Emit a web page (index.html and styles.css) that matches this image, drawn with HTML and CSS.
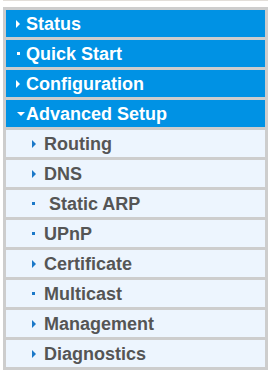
FILE: index.html
```html
<!DOCTYPE html>
<html lang="en">

<head>
    <meta charset="UTF-8">
    <meta name="viewport" content="width=device-width, initial-scale=1.0">
    <title>Menu</title>
    <link rel="stylesheet" href="styles.css">
</head>

<body>
    <div class="topline"></div>
    <div class="menu">
        <!-- top level items -->
        <div class="item main"><span class="ico"><i class="tri-r"></i></span>Status</div>
        <div class="item main"><span class="ico"><i class="sq"></i></span>Quick Start</div>
        <div class="item main"><span class="ico"><i class="tri-r"></i></span>Configuration</div>
        <div class="item main"><span class="ico"><i class="tri-d"></i></span>Advanced Setup</div>

        <!-- advanced setup submenu -->
        <div class="item sub"><span class="ico"><i class="tri-r"></i></span>Routing</div>
        <div class="item sub"><span class="ico"><i class="tri-r"></i></span>DNS</div>
        <div class="item sub"><span class="ico"><i class="sq"></i></span>&nbsp;Static ARP</div>
        <div class="item sub"><span class="ico"><i class="sq"></i></span>UPnP</div>
        <div class="item sub"><span class="ico"><i class="tri-r"></i></span>Certificate</div>
        <div class="item sub"><span class="ico"><i class="sq"></i></span>Multicast</div>
        <div class="item sub"><span class="ico"><i class="tri-r"></i></span>Management</div>
        <div class="item sub"><span class="ico"><i class="tri-r"></i></span>Diagnostics</div>
    </div>
</body>

</html>
```

FILE: styles.css
```css
* {
    padding: 0;
    margin: 0;
    box-sizing: border-box;
}

body {
    background-color: white;
    font-family: "Liberation Sans", Arial, sans-serif;
}

.topline {
    margin-left: 3px;
    width: 265px;
    height: 1px;
    background-color: #e2ded9;
}

.menu {
    margin: 6px 0 0 3px;
    width: 265px;
    padding: 3px;
    background-color: #cdcdcd;
    display: flex;
    flex-direction: column;
    gap: 3px;
}

.item {
    height: 27px;
    display: flex;
    align-items: center;
    padding-top: 2px;
    font-size: 18px;
    font-weight: bold;
    white-space: nowrap;
}

.ico {
    display: flex;
    align-items: center;
    height: 100%;
    margin-top: -2px;
}

.main {
    background-color: #0092e4;
    color: white;
    padding-left: 10px;
}

.main .ico {
    width: 10px;
}

.sub {
    background-color: #edf5fe;
    color: #555555;
    padding-left: 26px;
}

.sub .ico {
    width: 12px;
}

.tri-r {
    width: 0;
    height: 0;
    border-left: 4px solid currentColor;
    border-top: 4px solid transparent;
    border-bottom: 4px solid transparent;
}

.tri-d {
    width: 0;
    height: 0;
    margin-left: 1px;
    border-top: 4px solid currentColor;
    border-left: 4px solid transparent;
    border-right: 4px solid transparent;
}

.sq {
    width: 3px;
    height: 3px;
    margin-left: 1px;
    background-color: currentColor;
}

.sub .tri-r {
    color: #1b78c8;
}

.sub .sq {
    margin-left: 0;
    background-color: #1b78c8;
}
```
